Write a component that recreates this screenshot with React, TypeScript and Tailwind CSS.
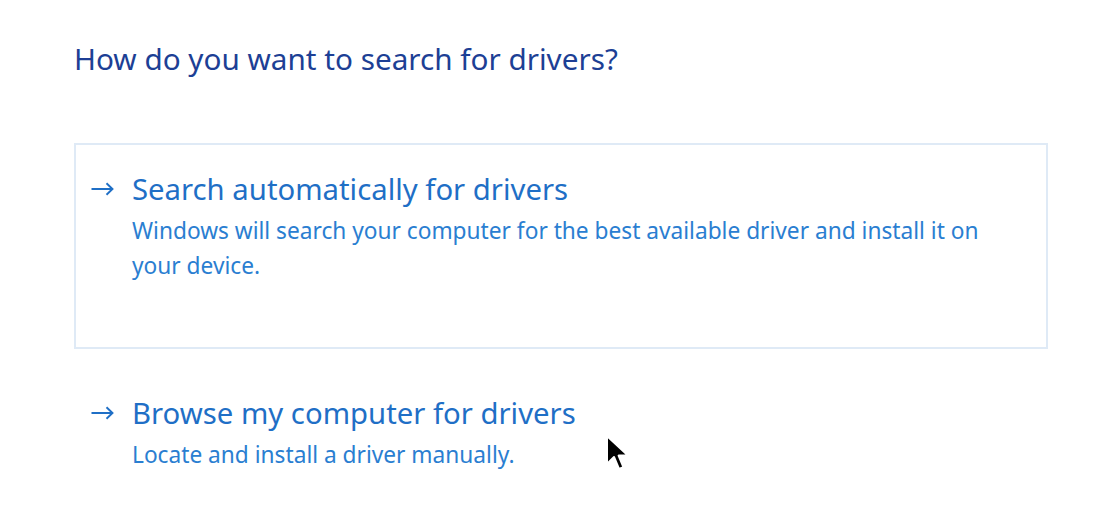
import React from 'react';

const font = { fontFamily: '"Noto Sans", "Open Sans", sans-serif' };

const Arrow = () => (
  <svg width="23" height="14" viewBox="0 0 23 14" className="shrink-0">
    <path d="M0.5 7 H21.5 M15.5 1.2 L21.5 7 L15.5 12.8" fill="none" stroke="currentColor" strokeWidth="1.9" />
  </svg>
);

const Option: React.FC<{ title: string; desc: React.ReactNode; boxed?: boolean }> = ({ title, desc, boxed }) => (
  <div
    className={`flex flex-col pl-[15px] ${
      boxed ? 'border-2 border-[#dfeaf6] h-[206px] pt-[24px]' : 'border-2 border-transparent pt-[42px]'
    }`}
  >
    <div className="flex items-center text-[#1f6fc6]">
      <div className="w-[41px] flex">
        <Arrow />
      </div>
      <span className="text-[29.3px] leading-[40px]">{title}</span>
    </div>
    <p className="pl-[41px] text-[22.7px] leading-[35px] text-[#2a7ed1] mt-[4px]">{desc}</p>
  </div>
);

export default function App() {
  return (
    <div className="w-[1100px] h-[531px] bg-white relative overflow-hidden" style={font}>
      <div className="pl-[74px] pr-[52px] pt-[39px]">
        <h1 className="text-[29.7px] leading-[40px] text-[#1d3f95]">How do you want to search for drivers?</h1>
        <div className="mt-[64px] flex flex-col">
          <Option
            boxed
            title="Search automatically for drivers"
            desc={<>Windows will search your computer for the best available driver and install it on<br />your device.</>}
          />
          <Option title="Browse my computer for drivers" desc="Locate and install a driver manually." />
        </div>
      </div>
      <svg className="absolute left-[605px] top-[434px]" width="26" height="38" viewBox="0 0 13 19">
        <path d="M1 1 L1 15 L4.5 11.5 L7 17.5 L9.2 16.6 L6.8 10.8 L11.5 10.8 Z" fill="#000" stroke="#fff" strokeWidth="1" strokeLinejoin="round" />
      </svg>
    </div>
  );
}
